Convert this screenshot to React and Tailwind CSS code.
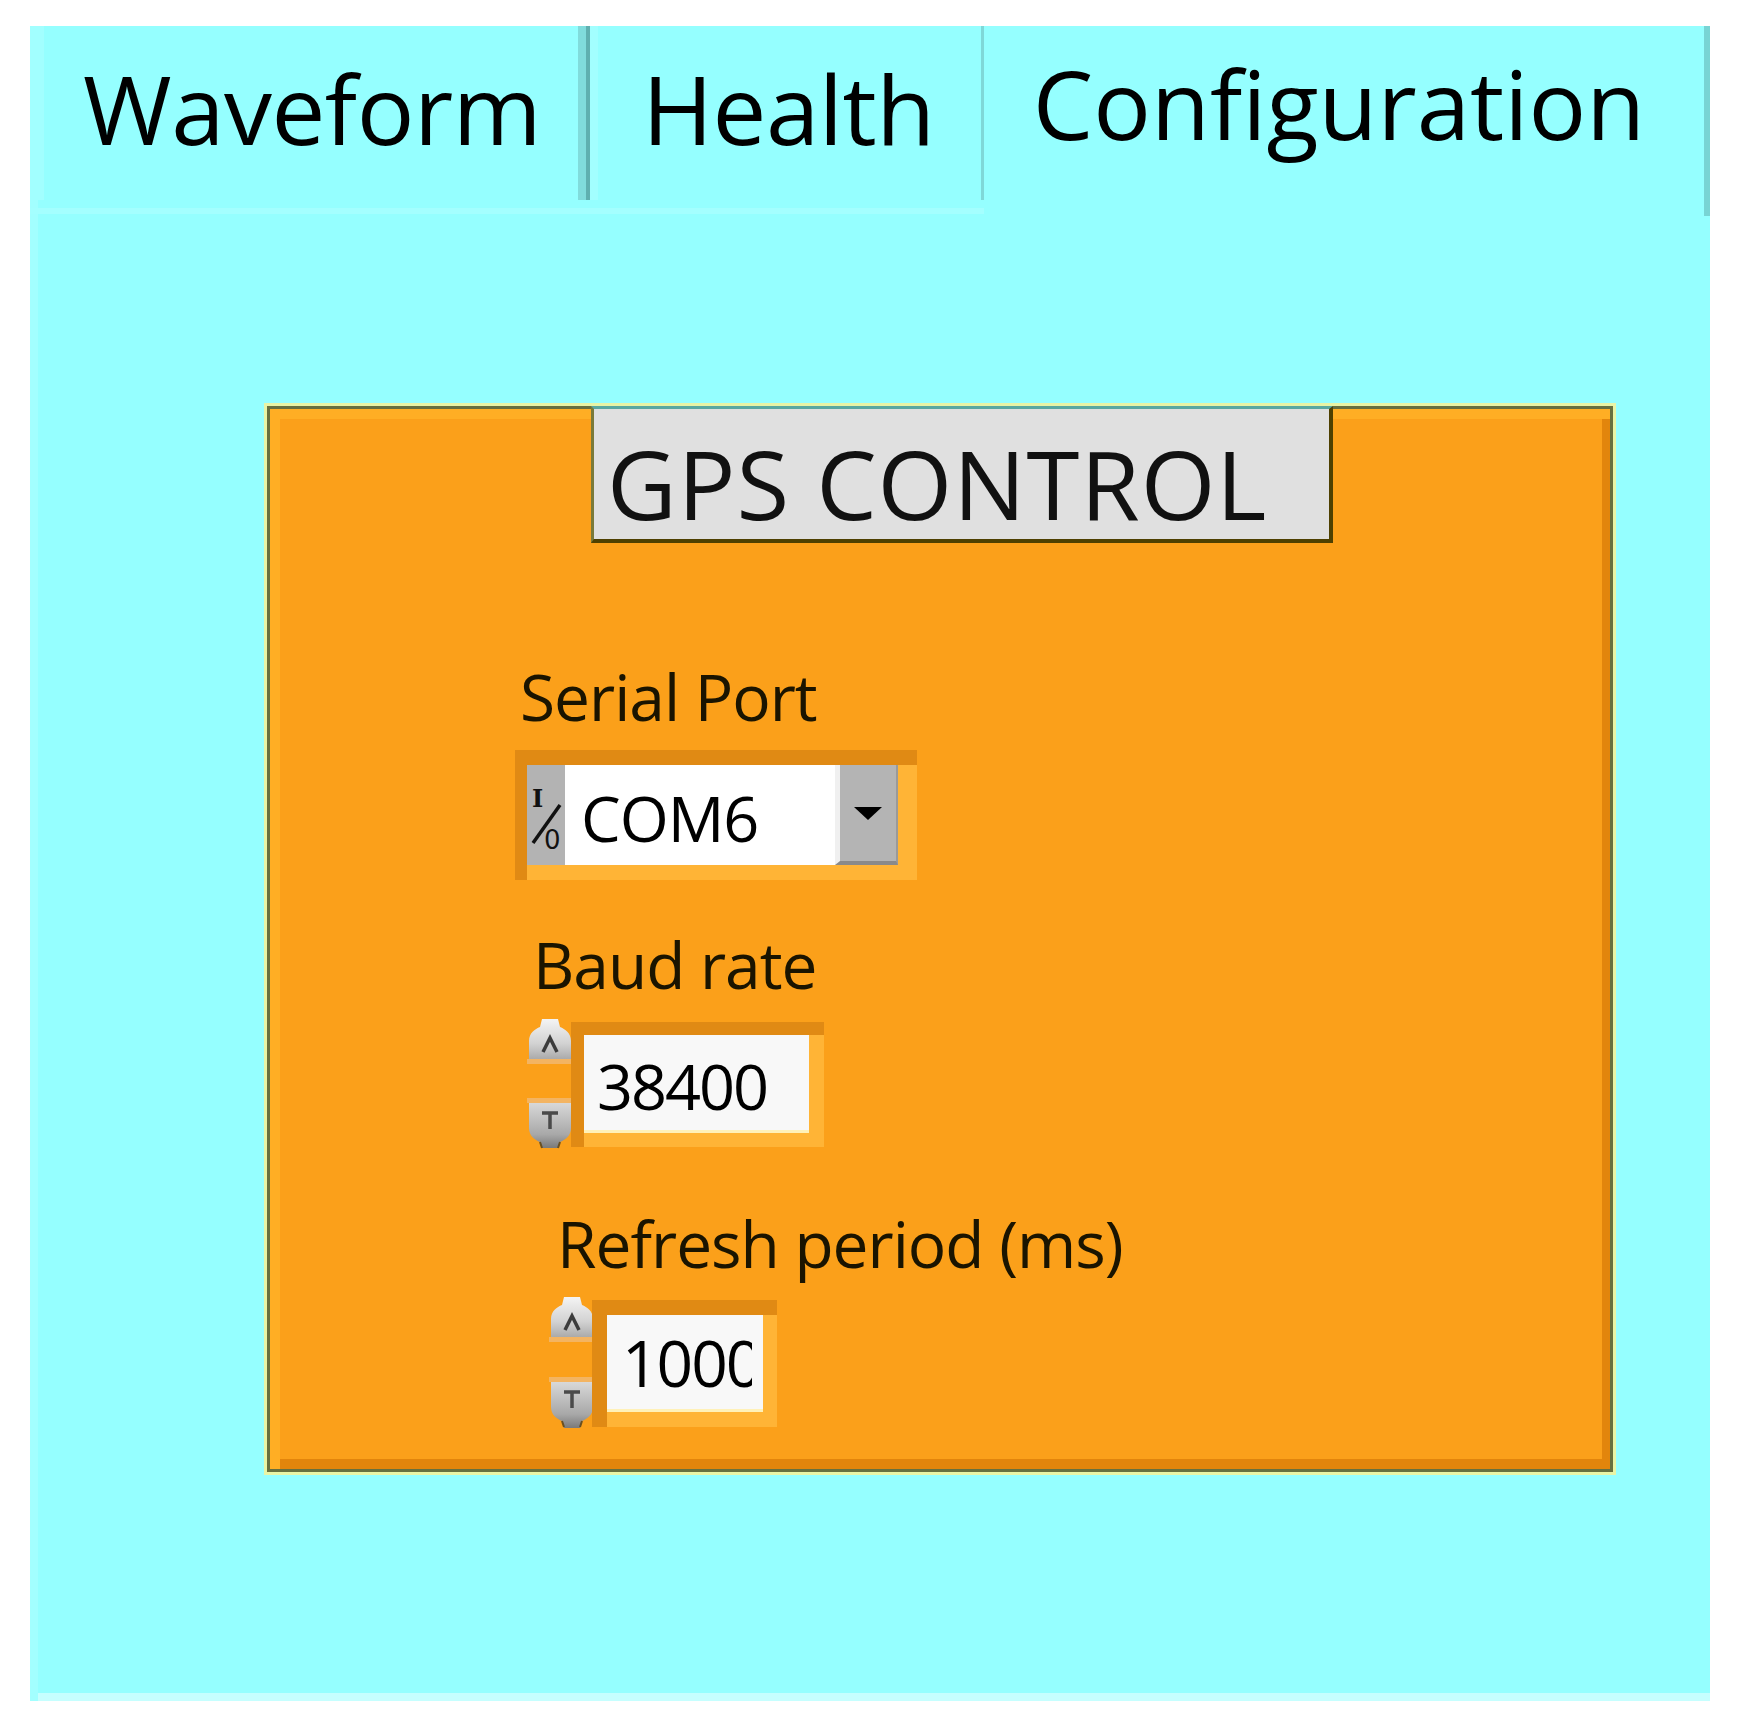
import React from "react";

function SpinButtons({ upH, gap, downH, id }) {
  return (
    <div className="flex flex-col w-[46px] shrink-0">
      <svg width="46" height={upH} viewBox={`0 0 46 ${upH}`}>
        <defs>
          <linearGradient id={`ug${id}`} x1="0" y1="0" x2="0" y2="1">
            <stop offset="0" stopColor="#f4f4f4" />
            <stop offset="0.6" stopColor="#d2d2d2" />
            <stop offset="1" stopColor="#a8a8a8" />
          </linearGradient>
        </defs>
        <path d={`M2 ${upH - 5} L2 24 C2 16 8 12 13 10 L15 2 L31 2 L33 10 C38 12 44 16 44 24 L44 ${upH - 5} Z`} fill={`url(#ug${id})`} />
        <rect x="0" y={upH - 6} width="46" height="5" fill="#f3b462" />
        <path d="M16 35 L23 21 L30 35" fill="none" stroke="#3c3c3c" strokeWidth="3.5" />
      </svg>
      <div style={{ height: gap }} />
      <svg width="46" height={downH} viewBox={`0 0 46 ${downH}`}>
        <defs>
          <linearGradient id={`dg${id}`} x1="0" y1="0" x2="0" y2="1">
            <stop offset="0" stopColor="#d8d8d8" />
            <stop offset="0.7" stopColor="#a8a8a8" />
            <stop offset="1" stopColor="#7a7a7a" />
          </linearGradient>
        </defs>
        <rect x="0" y="0" width="46" height="5" fill="#f3b462" />
        <path d={`M2 5 L44 5 L44 30 C44 38 38 42 33 44 L31 ${downH - 2} L15 ${downH - 2} L13 44 C8 42 2 38 2 30 Z`} fill={`url(#dg${id})`} />
        <path d="M15 15 L31 15 M23 15 L23 31" fill="none" stroke="#4a4a4a" strokeWidth="3.5" />
        <path d="M13 44 L15 50 M33 44 L31 50" fill="none" stroke="#6a5020" strokeWidth="2" />
      </svg>
    </div>
  );
}

export default function App() {
  return (
    <div className="w-[1738px] h-[1724px] bg-white pt-[26px] pl-[30px] font-['Open_Sans',sans-serif]">
      <div className="w-[1680px] h-[1675px] bg-[#95ffff] shadow-[inset_8px_0_0_#a2ffff,inset_0_-8px_0_#c6ffff] flex flex-col">
        {/* Tab bar */}
        <div className="flex h-[190px]">
          <div className="flex flex-col w-[954px]">
            <div className="flex h-[174px]">
              <div className="w-[560px] flex justify-center pt-[34px] pl-[8px] border-r-[4px] border-r-[#5fb0b0] shadow-[inset_-8px_0_0_#80dcdc,inset_14px_0_0_#a2ffff]">
                <span className="text-[96px] leading-none text-black tracking-[-0.5px]">Waveform</span>
              </div>
              <div className="w-[394px] flex justify-center pt-[34px] pl-[6px] border-r-[3px] border-r-[#7fd8d8] shadow-[inset_8px_0_0_#a2ffff]">
                <span className="text-[96px] leading-none text-black tracking-[-0.5px]">Health</span>
              </div>
            </div>
            <div className="h-[16px] flex flex-col">
              <div className="h-[8px]" />
              <div className="h-[6px] bg-[#a4ffff]" />
            </div>
          </div>
          <div className="flex-1 flex justify-center pt-[29px] pr-[10px] border-r-[6px] border-r-[#78d4d4]">
            <span className="text-[96px] leading-none text-black">Configuration</span>
          </div>
        </div>

        {/* Body */}
        <div className="mt-[190px] ml-[237px]">
          <div className="w-[1346px] h-[1066px] bg-[#fba01a] border-[3px] border-[#66703f] outline-[3px] outline-[#e8f4a6] shadow-[inset_10px_10px_0_#ffae24,inset_-8px_-10px_0_#e2850c] flex flex-col">
            {/* GPS CONTROL label */}
            <div className="-mt-[3px] ml-[321px] w-[742px] h-[137px] bg-[#e0e0e0] border-t-[3px] border-t-[#5aa8a0] border-l-[3px] border-l-[#7a7a3a] border-b-[4px] border-b-[#4e4000] border-r-[4px] border-r-[#4e4000] pt-[26px] pl-[13px]">
              <span className="text-[96px] leading-none text-[#111] tracking-[1px]">GPS CONTROL</span>
            </div>

            <div className="ml-[245px] flex flex-col items-start">
              {/* Serial Port */}
              <div className="mt-[121px] ml-[5px] text-[64px] leading-[65px] h-[65px] text-[#1a1400] tracking-[-1px]">Serial Port</div>
              <div className="mt-[21px] w-[402px] h-[130px] flex pt-[15px] pl-[12px] pr-[19px] pb-[15px] bg-[#f8a520] shadow-[inset_12px_15px_0_#e08a14,inset_-19px_-15px_0_#ffb436]">
                <div className="w-[38px] h-[100px] bg-[#b3b3b3] shrink-0">
                  <svg width="38" height="100" viewBox="0 0 38 100">
                    <text x="5" y="42" fontFamily="'DejaVu Serif', serif" fontWeight="bold" fontSize="24" fill="#111">I</text>
                    <line x1="6" y1="78" x2="33" y2="40" stroke="#111" strokeWidth="3.5" />
                    <text x="17" y="84" fontFamily="'DejaVu Sans', sans-serif" fontSize="26" fill="#111">0</text>
                  </svg>
                </div>
                <div className="w-[270px] h-[100px] bg-white pt-[21px] pl-[16px] shrink-0">
                  <span className="text-[63px] leading-none text-black tracking-[-1px]">COM6</span>
                </div>
                <div className="w-[63px] h-[100px] bg-[#b4b4b4] border-l-[5px] border-l-[#f0f0f0] border-b-[4px] border-b-[#8a8a8a] border-r-[2px] border-r-[#9a9a9a] flex items-center justify-center shrink-0">
                  <svg width="28" height="16" viewBox="0 0 28 16">
                    <path d="M0 2 L28 2 L14 15 Z" fill="#000" />
                  </svg>
                </div>
              </div>

              {/* Baud rate */}
              <div className="mt-[52px] ml-[18px] text-[64px] leading-[65px] h-[65px] text-[#1a1400] tracking-[-1px]">Baud rate</div>
              <div className="mt-[20px] ml-[12px] flex items-start">
                <SpinButtons upH={48} gap={33} downH={52} id="a" />
                <div className="mt-[5px] -ml-[2px] w-[253px] h-[125px] pt-[13px] pl-[13px] pr-[15px] pb-[14px] bg-[#f8a520] shadow-[inset_13px_13px_0_#e08a14,inset_-15px_-14px_0_#ffb436]">
                  <div className="w-[225px] h-[98px] bg-[#f8f8f8] border-b-[3px] border-b-[#fff1b8] pt-[19px] pl-[13px]">
                    <span className="text-[63px] leading-none text-black tracking-[-2px]">38400</span>
                  </div>
                </div>
              </div>

              {/* Refresh period */}
              <div className="mt-[61px] ml-[42px] text-[64px] leading-[65px] h-[65px] text-[#1a1400] tracking-[-1px]">Refresh period (ms)</div>
              <div className="mt-[19px] ml-[34px] flex items-start">
                <SpinButtons upH={48} gap={34} downH={53} id="b" />
                <div className="mt-[5px] -ml-[3px] w-[185px] h-[127px] pt-[15px] pl-[15px] pr-[14px] pb-[15px] bg-[#f8a520] shadow-[inset_15px_15px_0_#e08a14,inset_-14px_-15px_0_#ffb436]">
                  <div className="w-[156px] h-[97px] bg-[#f8f8f8] border-b-[3px] border-b-[#fff1b8]">
                    <div className="w-[145px] h-[94px] overflow-hidden pt-[16px] pl-[15px] whitespace-nowrap">
                      <span className="text-[64px] leading-none text-black tracking-[-2px]">1000</span>
                    </div>
                  </div>
                </div>
              </div>
            </div>
          </div>
        </div>
      </div>
    </div>
  );
}
